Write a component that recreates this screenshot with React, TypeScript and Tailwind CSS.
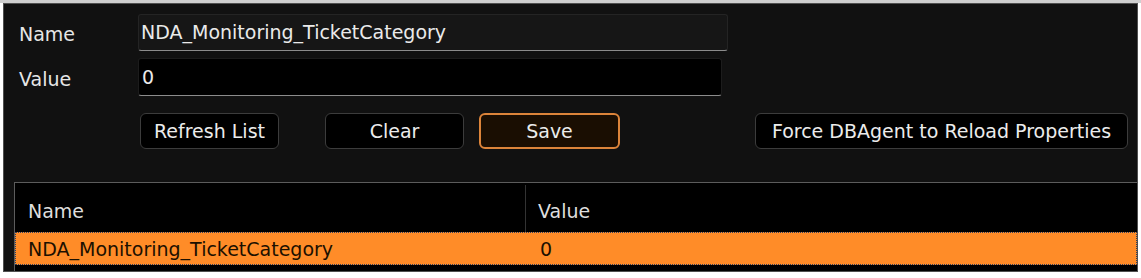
import React from "react";

const font = { fontFamily: '"DejaVu Sans", Verdana, sans-serif' };

function Btn({ label, className }: { label: string; className: string }) {
  return (
    <div
      className={`h-[36px] flex items-center justify-center rounded-[6px] text-[19px] text-[#ececec] ${className}`}
    >
      {label}
    </div>
  );
}

export default function App() {
  return (
    <div className="w-[1141px] h-[278px] bg-white border-t-[3px] border-[#cfcfcf] overflow-hidden" style={font}>
      <div className="ml-[3px] w-[1135px] h-[269px] border border-[#505050] bg-[#111111] flex flex-col overflow-hidden">
        {/* Name row */}
        <div className="flex items-center pt-[10px]">
          <div className="w-[134px] pl-[15px] pt-[4px] text-[19px] text-[#e6e6e6]">Name</div>
          <div className="w-[590px] h-[37px] bg-[#161616] border border-[#242424] border-b-[#8c8c8c] rounded-[3px] flex items-center pl-[2px] text-[19px] text-[#eaeaea]">
            NDA_Monitoring_TicketCategory
          </div>
        </div>
        {/* Value row */}
        <div className="flex items-center mt-[7px]">
          <div className="w-[134px] pl-[15px] pt-[4px] text-[19px] text-[#e6e6e6]">Value</div>
          <div className="w-[584px] h-[38px] bg-black border border-[#1c1c1c] border-b-[#8c8c8c] rounded-[3px] flex items-center pl-[3px] text-[19px] text-[#eaeaea]">
            0
          </div>
        </div>
        {/* Buttons */}
        <div className="flex items-center mt-[17px] pl-[136px]">
          <Btn label="Refresh List" className="w-[139px] bg-black border border-[#3c3c3c]" />
          <Btn label="Clear" className="ml-[46px] w-[139px] bg-black border border-[#3c3c3c]" />
          <Btn label="Save" className="ml-[15px] w-[141px] bg-[#1a0e02] border-2 border-[#dc843a]" />
          <Btn label="Force DBAgent to Reload Properties" className="ml-[135px] w-[373px] bg-black border border-[#3c3c3c]" />
        </div>
        {/* Table */}
        <div className="mt-[33px] ml-[10px] flex-1 bg-black border-t border-l border-[#5c5c5c] flex flex-col overflow-hidden">
          <div className="flex h-[49px] text-[19px] text-[#dedede]">
            <div className="w-[511px] pl-[13px] flex items-center pt-[6px] border-r border-[#333333] mt-[2px]">Name</div>
            <div className="flex-1 pl-[12px] flex items-center pt-[6px] mt-[2px]">Value</div>
          </div>
          <div className="flex h-[33px] bg-[#ff8c28] border border-dotted border-[#2e3f60] text-[19px] text-[#1c1000]">
            <div className="w-[511px] pl-[12px] flex items-center pt-[2px]">NDA_Monitoring_TicketCategory</div>
            <div className="flex-1 pl-[13px] flex items-center pt-[2px]">0</div>
          </div>
        </div>
      </div>
    </div>
  );
}
